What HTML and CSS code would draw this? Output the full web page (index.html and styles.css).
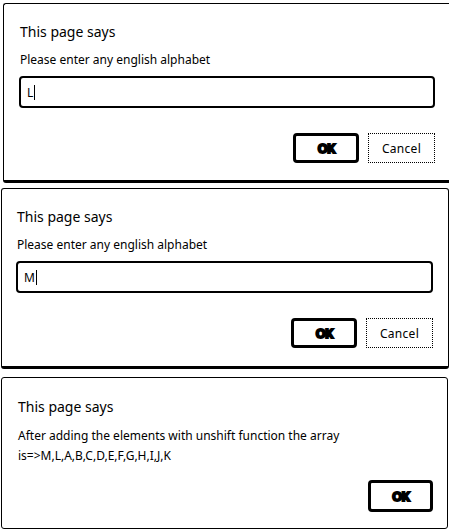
FILE: index.html
```html
<!DOCTYPE html>
<html>
<head>
<meta charset="utf-8">
<link rel="stylesheet" href="styles.css">
</head>
<body>
<div class="stack">
  <section class="dialog d1">
    <h1 class="title">This page says</h1>
    <p class="msg">Please enter any english alphabet</p>
    <div class="field"><span class="val">L</span><span class="caret"></span></div>
    <div class="actions">
      <button class="btn ok"><span>OK</span></button>
      <button class="btn cancel">Cancel</button>
    </div>
  </section>
  <section class="dialog d2">
    <h1 class="title">This page says</h1>
    <p class="msg">Please enter any english alphabet</p>
    <div class="field"><span class="val">M</span><span class="caret"></span></div>
    <div class="actions">
      <button class="btn ok"><span>OK</span></button>
      <button class="btn cancel">Cancel</button>
    </div>
  </section>
  <section class="dialog d3">
    <h1 class="title">This page says</h1>
    <p class="msg long">After adding the elements with unshift function the array is=&gt;M,L,A,B,C,D,E,F,G,H,I,J,K</p>
    <div class="actions">
      <button class="btn ok"><span>OK</span></button>
    </div>
  </section>
</div>
</body>
</html>
```
FILE: styles.css
```css
* { box-sizing: border-box; }
html, body { margin: 0; padding: 0; background: #fff; }
body {
  width: 451px;
  height: 532px;
  overflow: hidden;
  font-family: "Noto Sans", "Open Sans", sans-serif;
  color: #000;
}
.stack {
  display: flex;
  flex-direction: column;
  padding-top: 3px;
}
.dialog {
  border: 1px solid #000;
  border-radius: 3px;
  background: #fff;
  padding: 18px 14px 0 16px;
}
.d1 {
  margin-left: 3px;
  width: 446px;
  height: 180px;
  border-right: none;
  border-bottom-width: 3px;
  border-radius: 3px 0 0 3px;
}
.d2 {
  margin-top: 5px;
  margin-left: 1px;
  width: 448px;
  height: 181px;
  border-bottom-width: 3px;
  padding-left: 15px;
  padding-right: 15px;
}
.d3 {
  margin-top: 8px;
  margin-left: 1px;
  width: 447px;
  height: 152px;
  padding-top: 19px;
  padding-right: 14px;
}
.title {
  margin: 0;
  font-size: 14px;
  font-weight: 400;
  line-height: 20px;
}
.msg {
  margin: 8px 0 0;
  font-size: 12px;
  line-height: 20px;
}
.msg.long { margin-top: 9px; line-height: 20px; }
.field {
  margin-top: 6px;
  margin-left: -1px;
  height: 32px;
  border: 2px solid #000;
  border-radius: 4px;
  display: flex;
  align-items: center;
  padding-left: 6px;
  font-size: 12px;
}
.caret {
  display: inline-block;
  width: 1px;
  height: 15px;
  background: #000;
  margin-left: 1px;
}
.actions {
  display: flex;
  justify-content: flex-end;
  gap: 9px;
  margin-top: 25px;
}
.d3 .actions { margin-top: 14px; }
.btn {
  font-family: inherit;
  height: 30px;
  background: #fff;
  color: #000;
  padding: 0;
  display: flex;
  align-items: center;
  justify-content: center;
}
.ok {
  width: 66px;
  border: 3px solid #000;
  border-radius: 4px;
  font-size: 13px;
  font-weight: 700;
}
.ok span {
  -webkit-text-stroke: 1.8px #000;
  letter-spacing: -1px;
}
.cancel {
  width: 67px;
  border: 1px dotted #000;
  border-radius: 0;
  font-size: 12px;
  letter-spacing: 0.3px;
}
.d3 .ok { width: 65px; height: 32px; }
```
